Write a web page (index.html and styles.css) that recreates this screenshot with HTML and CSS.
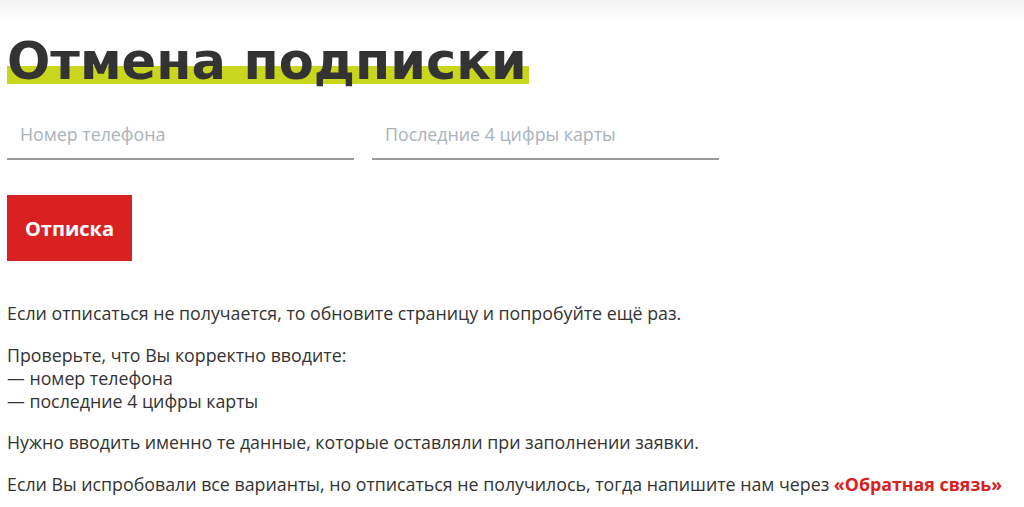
FILE: index.html
```html
<!DOCTYPE html>
<html lang="ru">
<head>
<meta charset="utf-8">
<link rel="stylesheet" href="styles.css">
</head>
<body>
<div class="topbar"></div>
<main class="page">
  <h1 class="title"><span class="title-text">Отмена подписки</span></h1>
  <form class="form">
    <div class="fields">
      <label class="field"><input class="input" type="text" placeholder="Номер телефона"></label>
      <label class="field"><input class="input" type="text" placeholder="Последние 4 цифры карты"></label>
    </div>
    <button class="btn" type="button">Отписка</button>
  </form>
  <div class="info">
    <p>Если отписаться не получается, то обновите страницу и попробуйте ещё раз.</p>
    <p>Проверьте, что Вы корректно вводите:<br>— номер телефона<br>— последние 4 цифры карты</p>
    <p>Нужно вводить именно те данные, которые оставляли при заполнении заявки.</p>
    <p>Если Вы испробовали все варианты, но отписаться не получилось, тогда напишите нам через <a class="link" href="#">«Обратная связь»</a></p>
  </div>
</main>
</body>
</html>
```
FILE: styles.css
```css
html, body {
  margin: 0;
  padding: 0;
  background: #fff;
}
body {
  font-family: "Open Sans", "Liberation Sans", sans-serif;
  color: #333;
  overflow: hidden;
}
.topbar {
  height: 22px;
  background: linear-gradient(#f3f3f3, #ffffff);
}
.page {
  padding: 0 7px;
}
.title {
  margin: 12px 0 0;
  font-family: "DejaVu Sans", "Noto Sans", sans-serif;
  font-weight: bold;
  font-size: 51px;
  line-height: 56px;
  color: #333;
  letter-spacing: 0;
}
.title-text {
  background: linear-gradient(transparent 0, transparent 34px, #c8d61e 34px, #c8d61e 52px, transparent 52px);
  padding-right: 2px;
}
.fields {
  display: flex;
  gap: 18px;
  margin-top: 18px;
}
.field {
  width: 347px;
  display: block;
}
.input {
  width: 100%;
  box-sizing: border-box;
  border: 0;
  border-bottom: 2px solid #9a9a9a;
  height: 52px;
  padding: 2px 13px 0;
  font-family: "Open Sans", sans-serif;
  font-size: 17.8px;
  color: #333;
  outline: none;
  background: transparent;
}
.input::placeholder {
  color: #a9b3ba;
}
.btn {
  margin-top: 35px;
  width: 125px;
  height: 66px;
  border: 0;
  background: #d92121;
  color: #fff;
  font-family: "Open Sans", sans-serif;
  font-weight: bold;
  font-size: 20px;
  cursor: pointer;
  display: block;
  padding: 0;
}
.info {
  margin-top: 41px;
  font-size: 17.8px;
  line-height: 23px;
}
.info p {
  margin: 0 0 18.5px;
}
.link {
  color: #d92121;
  font-weight: bold;
  text-decoration: none;
}
```
